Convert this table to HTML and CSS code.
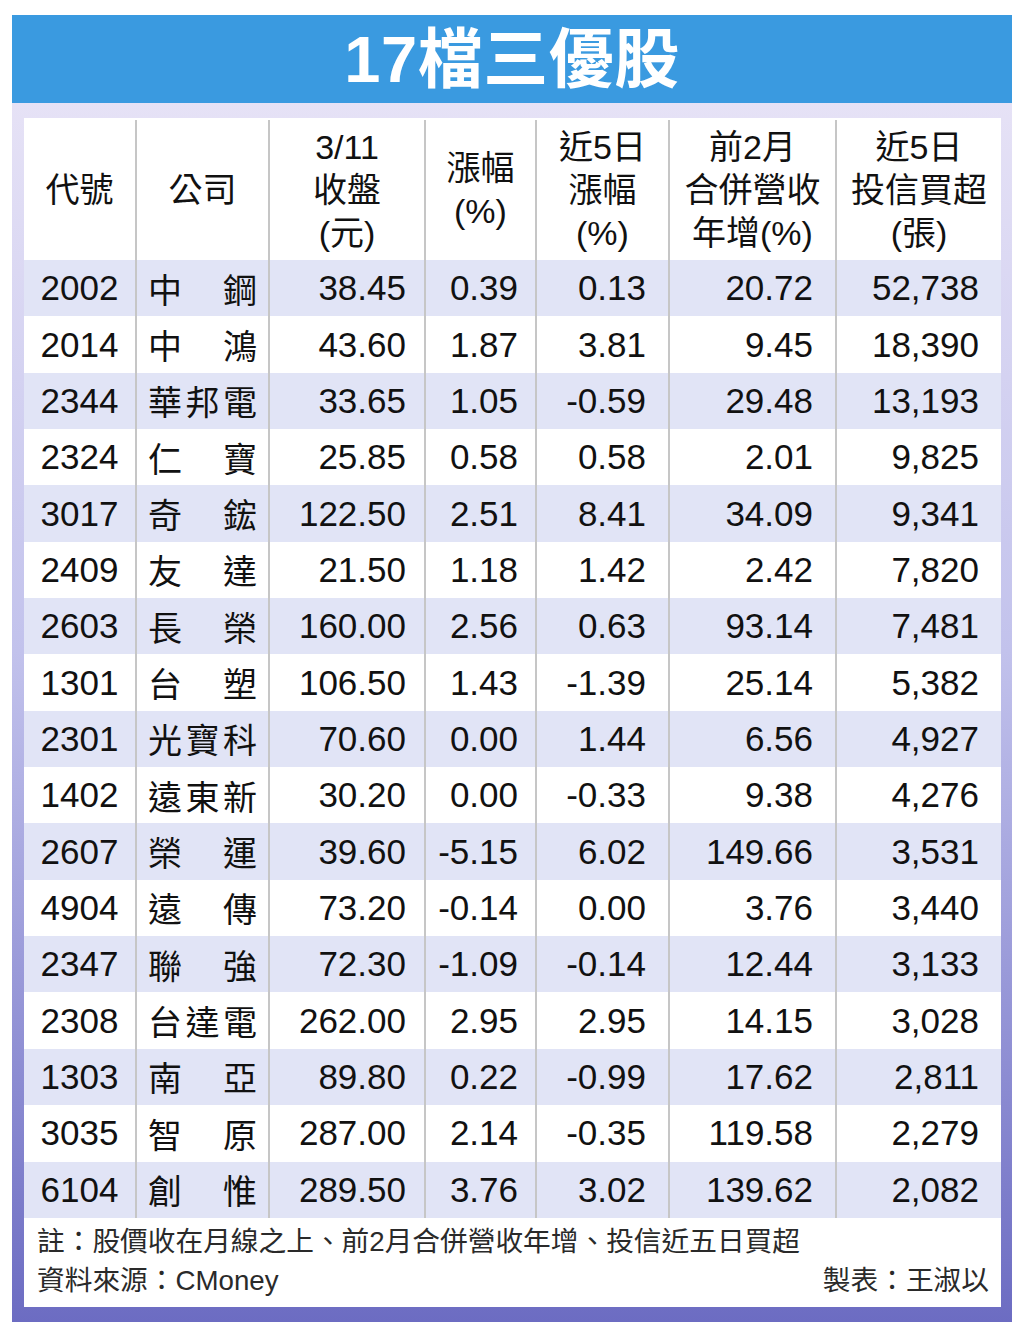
FILE: index.html
```html
<!DOCTYPE html>
<html lang="zh-Hant">
<head>
<meta charset="utf-8">
<title>17檔三優股</title>
<link rel="stylesheet" href="styles.css">
</head>
<body>
<div class="frame">
  <div class="title">17檔三優股</div>
  <div class="body">
    <div class="sheet">
      <div class="row head">
        <div class="cell c">代號</div>
        <div class="cell c">公司</div>
        <div class="cell c">3/11<br>收盤<br>(元)</div>
        <div class="cell c">漲幅<br>(%)</div>
        <div class="cell c">近5日<br>漲幅<br>(%)</div>
        <div class="cell c">前2月<br>合併營收<br>年增(%)</div>
        <div class="cell c">近5日<br>投信買超<br>(張)</div>
      </div>
      <div class="row alt"><div class="cell c">2002</div><div class="cell name"><span>中</span><span>鋼</span></div><div class="cell r3">38.45</div><div class="cell r4">0.39</div><div class="cell r">0.13</div><div class="cell r">20.72</div><div class="cell r">52,738</div></div>
      <div class="row"><div class="cell c">2014</div><div class="cell name"><span>中</span><span>鴻</span></div><div class="cell r3">43.60</div><div class="cell r4">1.87</div><div class="cell r">3.81</div><div class="cell r">9.45</div><div class="cell r">18,390</div></div>
      <div class="row alt"><div class="cell c">2344</div><div class="cell name"><span>華</span><span>邦</span><span>電</span></div><div class="cell r3">33.65</div><div class="cell r4">1.05</div><div class="cell r">-0.59</div><div class="cell r">29.48</div><div class="cell r">13,193</div></div>
      <div class="row"><div class="cell c">2324</div><div class="cell name"><span>仁</span><span>寶</span></div><div class="cell r3">25.85</div><div class="cell r4">0.58</div><div class="cell r">0.58</div><div class="cell r">2.01</div><div class="cell r">9,825</div></div>
      <div class="row alt"><div class="cell c">3017</div><div class="cell name"><span>奇</span><span>鋐</span></div><div class="cell r3">122.50</div><div class="cell r4">2.51</div><div class="cell r">8.41</div><div class="cell r">34.09</div><div class="cell r">9,341</div></div>
      <div class="row"><div class="cell c">2409</div><div class="cell name"><span>友</span><span>達</span></div><div class="cell r3">21.50</div><div class="cell r4">1.18</div><div class="cell r">1.42</div><div class="cell r">2.42</div><div class="cell r">7,820</div></div>
      <div class="row alt"><div class="cell c">2603</div><div class="cell name"><span>長</span><span>榮</span></div><div class="cell r3">160.00</div><div class="cell r4">2.56</div><div class="cell r">0.63</div><div class="cell r">93.14</div><div class="cell r">7,481</div></div>
      <div class="row"><div class="cell c">1301</div><div class="cell name"><span>台</span><span>塑</span></div><div class="cell r3">106.50</div><div class="cell r4">1.43</div><div class="cell r">-1.39</div><div class="cell r">25.14</div><div class="cell r">5,382</div></div>
      <div class="row alt"><div class="cell c">2301</div><div class="cell name"><span>光</span><span>寶</span><span>科</span></div><div class="cell r3">70.60</div><div class="cell r4">0.00</div><div class="cell r">1.44</div><div class="cell r">6.56</div><div class="cell r">4,927</div></div>
      <div class="row"><div class="cell c">1402</div><div class="cell name"><span>遠</span><span>東</span><span>新</span></div><div class="cell r3">30.20</div><div class="cell r4">0.00</div><div class="cell r">-0.33</div><div class="cell r">9.38</div><div class="cell r">4,276</div></div>
      <div class="row alt"><div class="cell c">2607</div><div class="cell name"><span>榮</span><span>運</span></div><div class="cell r3">39.60</div><div class="cell r4">-5.15</div><div class="cell r">6.02</div><div class="cell r">149.66</div><div class="cell r">3,531</div></div>
      <div class="row"><div class="cell c">4904</div><div class="cell name"><span>遠</span><span>傳</span></div><div class="cell r3">73.20</div><div class="cell r4">-0.14</div><div class="cell r">0.00</div><div class="cell r">3.76</div><div class="cell r">3,440</div></div>
      <div class="row alt"><div class="cell c">2347</div><div class="cell name"><span>聯</span><span>強</span></div><div class="cell r3">72.30</div><div class="cell r4">-1.09</div><div class="cell r">-0.14</div><div class="cell r">12.44</div><div class="cell r">3,133</div></div>
      <div class="row"><div class="cell c">2308</div><div class="cell name"><span>台</span><span>達</span><span>電</span></div><div class="cell r3">262.00</div><div class="cell r4">2.95</div><div class="cell r">2.95</div><div class="cell r">14.15</div><div class="cell r">3,028</div></div>
      <div class="row alt"><div class="cell c">1303</div><div class="cell name"><span>南</span><span>亞</span></div><div class="cell r3">89.80</div><div class="cell r4">0.22</div><div class="cell r">-0.99</div><div class="cell r">17.62</div><div class="cell r">2,811</div></div>
      <div class="row"><div class="cell c">3035</div><div class="cell name"><span>智</span><span>原</span></div><div class="cell r3">287.00</div><div class="cell r4">2.14</div><div class="cell r">-0.35</div><div class="cell r">119.58</div><div class="cell r">2,279</div></div>
      <div class="row alt"><div class="cell c">6104</div><div class="cell name"><span>創</span><span>惟</span></div><div class="cell r3">289.50</div><div class="cell r4">3.76</div><div class="cell r">3.02</div><div class="cell r">139.62</div><div class="cell r">2,082</div></div>
      <div class="foot">
        <div class="note">註：股價收在月線之上、前2月合併營收年增、投信近五日買超</div>
        <div class="credits">
          <span>資料來源：CMoney</span>
          <span>製表：王淑以</span>
        </div>
      </div>
    </div>
  </div>
</div>
</body>
</html>
```
FILE: styles.css
```css
html, body {
  margin: 0;
  padding: 0;
  background: #ffffff;
}

body {
  font-family: "Liberation Sans", "Noto Sans CJK TC", sans-serif;
  color: #111111;
}

.frame {
  width: 1000px;
  margin: 15px 0 0 12px;
}

.title {
  height: 88px;
  background: #3a9ae0;
  color: #ffffff;
  font-weight: bold;
  font-size: 65px;
  line-height: 90px;
  text-align: center;
  letter-spacing: 0.5px;
}

.body {
  padding: 15px 11px 15px 12px;
  background: linear-gradient(to bottom, #e6e2f6 0%, #c2c2ec 45%, #9494d6 75%, #6c6cc2 100%);
}

.sheet {
  background: #ffffff;
}

.row {
  display: grid;
  grid-template-columns: 111px 133px 156px 111px 133px 167px 166px;
  height: 56.35px;
  font-size: 35px;
}

.row.head {
  height: 142px;
  line-height: 43px;
  font-size: 34px;
  padding-top: 2px;
  box-sizing: border-box;
}

.row.alt {
  background: #e1e4f6;
}

.cell {
  box-sizing: border-box;
  display: flex;
  align-items: center;
  white-space: nowrap;
}

.cell + .cell {
  border-left: 2px solid #c6c6c6;
}

.c {
  justify-content: center;
  text-align: center;
}

.name {
  justify-content: space-between;
  padding: 0 11px 0 11px;
  font-size: 34px;
}

.r3 {
  justify-content: flex-end;
  padding-right: 18px;
}

.r4 {
  justify-content: flex-end;
  padding-right: 17px;
}

.r {
  justify-content: flex-end;
  padding-right: 22px;
}

.foot {
  height: 89px;
  box-sizing: border-box;
  padding: 4px 12px 0 13px;
  font-size: 27.7px;
  line-height: 39px;
  color: #2a2a2a;
}

.credits {
  display: flex;
  justify-content: space-between;
}
```
